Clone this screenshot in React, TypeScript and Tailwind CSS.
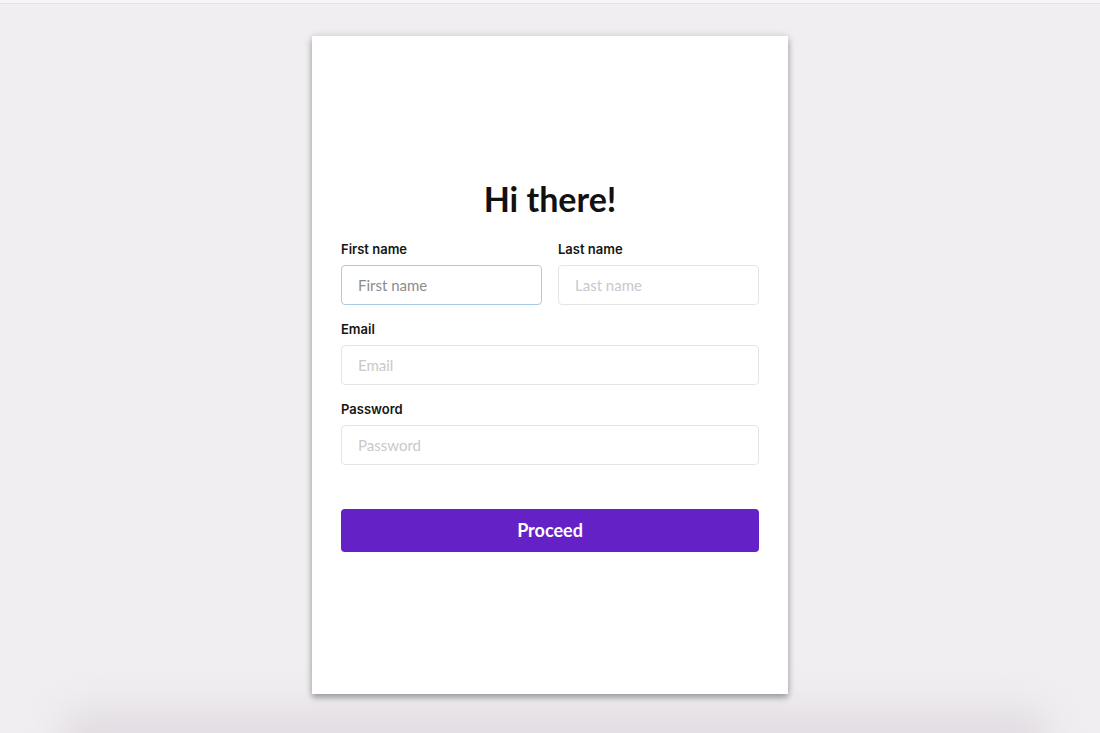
import React from "react";

function Field({ label, placeholder, focused = false, type = "text" }: { label: string; placeholder: string; focused?: boolean; type?: string }) {
  return (
    <div className="flex flex-col">
      <label className="mb-2 h-4 text-[13px] leading-4 font-semibold text-[#161616]" style={{ fontFamily: "Inter, 'Liberation Sans', sans-serif" }}>
        {label}
      </label>
      <input
        type={type}
        placeholder={placeholder}
        className={
          "h-10 w-full rounded-[4px] border bg-white px-4 text-[15px] outline-none " +
          (focused
            ? "border-[#a9cbe6] placeholder:text-[#8c8c8e]"
            : "border-[#e6e4e9] placeholder:text-[#c9c8cd]")
        }
        style={{ fontFamily: "Lato, 'Liberation Sans', sans-serif" }}
      />
    </div>
  );
}

export default function App() {
  return (
    <div className="relative h-[733px] w-[1100px] overflow-hidden bg-[#f0eef1]">
      <div className="h-[3px] bg-[#f6f5f7]" />
      <div className="h-px bg-[#e3e1e5]" />
      <div className="pointer-events-none absolute left-[60px] right-[50px] top-[708px] h-[60px] rounded-[30px] bg-[#e2dde2] blur-lg" />
      <div className="relative mx-auto mt-[32px] flex h-[658px] w-[476px] flex-col justify-center bg-white px-[29px] shadow-[0_4px_6px_rgba(0,0,0,0.28),0_0_8px_rgba(0,0,0,0.14)]">
        <h1
          className="mb-[22px] text-center text-[34px] leading-10 font-bold text-[#111]"
          style={{ fontFamily: "Lato, 'Liberation Sans', sans-serif" }}
        >
          Hi there!
        </h1>
        <div className="flex flex-col gap-4">
          <div className="grid grid-cols-2 gap-4">
            <Field label="First name" placeholder="First name" focused />
            <Field label="Last name" placeholder="Last name" />
          </div>
          <Field label="Email" placeholder="Email" type="email" />
          <Field label="Password" placeholder="Password" type="password" />
        </div>
        <button
          className="mt-[44px] h-[43px] w-full rounded-[4px] bg-[#6422c6] text-[18px] font-bold text-white"
          style={{ fontFamily: "Lato, 'Liberation Sans', sans-serif" }}
        >
          Proceed
        </button>
      </div>
    </div>
  );
}
